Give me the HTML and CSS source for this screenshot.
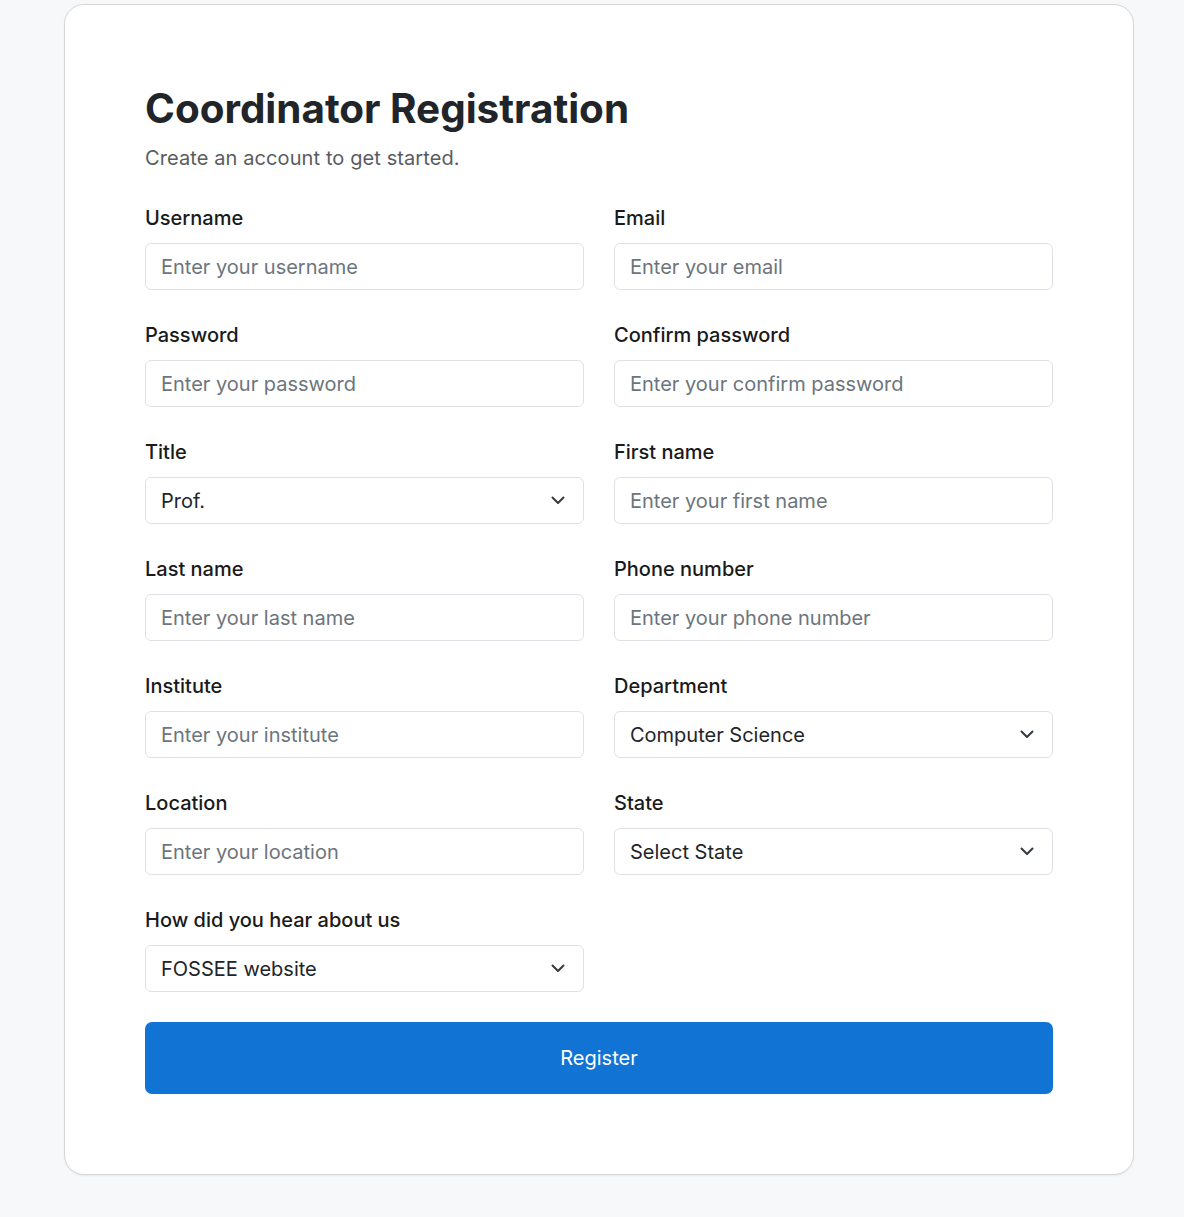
FILE: index.html
```html
<!DOCTYPE html>
<html lang="en">
<head>
<meta charset="utf-8">
<title>Coordinator Registration</title>
<link rel="stylesheet" href="styles.css">
</head>
<body>
<main class="card">
  <h1 class="title">Coordinator Registration</h1>
  <p class="subtitle">Create an account to get started.</p>
  <form class="form">
    <div class="grid">
      <div class="field">
        <label class="label">Username</label>
        <input class="control" type="text" placeholder="Enter your username">
      </div>
      <div class="field">
        <label class="label">Email</label>
        <input class="control" type="text" placeholder="Enter your email">
      </div>
      <div class="field">
        <label class="label">Password</label>
        <input class="control" type="password" placeholder="Enter your password">
      </div>
      <div class="field">
        <label class="label">Confirm password</label>
        <input class="control" type="password" placeholder="Enter your confirm password">
      </div>
      <div class="field">
        <label class="label">Title</label>
        <div class="select-wrap">
          <select class="control select"><option>Prof.</option></select>
          <svg class="chev" width="14" height="9" viewBox="0 0 14 9"><path d="M1.5 1.5 L7 7 L12.5 1.5" fill="none" stroke="#343a40" stroke-width="2" stroke-linecap="round" stroke-linejoin="round"/></svg>
        </div>
      </div>
      <div class="field">
        <label class="label">First name</label>
        <input class="control" type="text" placeholder="Enter your first name">
      </div>
      <div class="field">
        <label class="label">Last name</label>
        <input class="control" type="text" placeholder="Enter your last name">
      </div>
      <div class="field">
        <label class="label">Phone number</label>
        <input class="control" type="text" placeholder="Enter your phone number">
      </div>
      <div class="field">
        <label class="label">Institute</label>
        <input class="control" type="text" placeholder="Enter your institute">
      </div>
      <div class="field">
        <label class="label">Department</label>
        <div class="select-wrap">
          <select class="control select"><option>Computer Science</option></select>
          <svg class="chev" width="14" height="9" viewBox="0 0 14 9"><path d="M1.5 1.5 L7 7 L12.5 1.5" fill="none" stroke="#343a40" stroke-width="2" stroke-linecap="round" stroke-linejoin="round"/></svg>
        </div>
      </div>
      <div class="field">
        <label class="label">Location</label>
        <input class="control" type="text" placeholder="Enter your location">
      </div>
      <div class="field">
        <label class="label">State</label>
        <div class="select-wrap">
          <select class="control select"><option>Select State</option></select>
          <svg class="chev" width="14" height="9" viewBox="0 0 14 9"><path d="M1.5 1.5 L7 7 L12.5 1.5" fill="none" stroke="#343a40" stroke-width="2" stroke-linecap="round" stroke-linejoin="round"/></svg>
        </div>
      </div>
      <div class="field">
        <label class="label">How did you hear about us</label>
        <div class="select-wrap">
          <select class="control select"><option>FOSSEE website</option></select>
          <svg class="chev" width="14" height="9" viewBox="0 0 14 9"><path d="M1.5 1.5 L7 7 L12.5 1.5" fill="none" stroke="#343a40" stroke-width="2" stroke-linecap="round" stroke-linejoin="round"/></svg>
        </div>
      </div>
    </div>
    <button class="btn" type="button">Register</button>
  </form>
</main>
</body>
</html>
```

FILE: styles.css
```css
* { box-sizing: border-box; }
html, body { margin: 0; padding: 0; }
body {
  background: #f7f8fa;
  font-family: Inter, "Noto Sans", sans-serif;
  color: #212529;
  padding: 4px 0 40px 64px;
}
.card {
  width: 1070px;
  background: #fff;
  border: 1px solid #d6d6d6;
  border-radius: 20px;
  box-shadow: 0 1px 2px rgba(0,0,0,0.06);
  padding: 80px 80px 80px;
}
.title {
  margin: 0;
  font-size: 40.4px;
  line-height: 48px;
  font-weight: 700;
  color: #212529;
}
.subtitle {
  margin: 10px 0 0;
  font-size: 20px;
  line-height: 30px;
  color: #595c5f;
  letter-spacing: 0.1px;
}
.form { margin-top: 30px; }
.grid {
  display: grid;
  grid-template-columns: 1fr 1fr;
  column-gap: 30px;
}
.field {
  display: flex;
  flex-direction: column;
  margin-bottom: 30px;
}
.label {
  font-size: 20px;
  line-height: 30px;
  font-weight: 500;
  color: #1a1a1a;
  margin-bottom: 10px;
}
.control {
  width: 100%;
  height: 47px;
  border: 1px solid #dee2e6;
  border-radius: 6px;
  padding: 0 15px;
  font-family: inherit;
  font-size: 20px;
  color: #212529;
  background: #fff;
  outline: none;
}
.control::placeholder { color: #6c757d; }
.select-wrap { position: relative; }
.select {
  appearance: none;
  -webkit-appearance: none;
}
.chev {
  position: absolute;
  right: 19px;
  top: 19px;
  pointer-events: none;
}
.btn {
  display: block;
  width: 100%;
  height: 72px;
  border: none;
  border-radius: 7px;
  background: #1174d4;
  color: #fff;
  font-family: inherit;
  font-size: 20px;
  font-weight: 400;
  cursor: pointer;
}
```
